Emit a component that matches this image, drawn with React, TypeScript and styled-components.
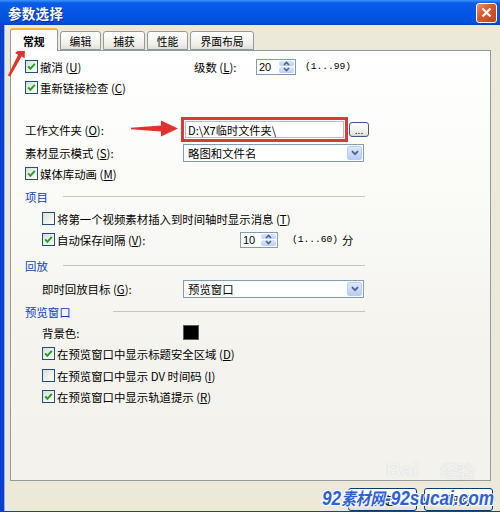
import React from 'react';
import styled, { createGlobalStyle } from 'styled-components';

const GlobalStyle = createGlobalStyle`
  html, body {
    margin: 0;
    padding: 0;
    background: #fff;
  }
  body {
    font-family: "Noto Sans CJK SC", "Liberation Sans", sans-serif;
    font-size: 11.4px;
    color: #000;
  }
`;

const Window = styled.div`
  position: relative;
  width: 500px;
  height: 512px;
  display: flex;
  flex-direction: column;
  overflow: hidden;
`;

const TitleBar = styled.div`
  height: 25px;
  flex: none;
  display: flex;
  align-items: center;
  justify-content: space-between;
  padding: 0 3px 0 8px;
  background: linear-gradient(180deg, #3d95ff 0%, #0a5ce8 12%, #0356e6 50%, #0250de 85%, #0643c4 100%);
  color: #fff;
  font-weight: bold;
  font-size: 13.5px;
  letter-spacing: 0.3px;
  text-shadow: 1px 1px #0b2a8f;
`;

const CloseButton = styled.div`
  width: 19px;
  height: 18px;
  border: 1px solid #fff;
  border-radius: 3px;
  background: linear-gradient(135deg, #f0906a 0%, #dd5a30 40%, #c94119 100%);
  display: flex;
  align-items: center;
  justify-content: center;
`;

const Frame = styled.div`
  flex: 1;
  display: flex;
  flex-direction: column;
  background: #ece9d8;
  border-left: 4px solid #0b3fd0;
  border-bottom: 4px solid #0b3fd0;
  box-shadow: inset 1px 0 #8fb0f0;
  padding: 5px 9px 0 6px;
`;

const TabStrip = styled.div`
  height: 20px;
  display: flex;
  align-items: flex-end;
  gap: 2px;
`;

const Tab = styled.div<{ $active?: boolean }>`
  height: ${(p) => (p.$active ? 21 : 17)}px;
  margin-bottom: ${(p) => (p.$active ? -1 : 0)}px;
  padding: 0 ${(p) => (p.$active ? 12 : 9)}px;
  position: relative;
  z-index: ${(p) => (p.$active ? 2 : 0)};
  display: flex;
  align-items: center;
  justify-content: center;
  border: 1px solid #919b9c;
  border-bottom: ${(p) => (p.$active ? 'none' : '1px solid #919b9c')};
  border-top: ${(p) => (p.$active ? '2px solid #f4b43c' : '1px solid #919b9c')};
  border-radius: 3px 3px 0 0;
  background: ${(p) => (p.$active ? '#fcfcfe' : 'linear-gradient(#ffffff, #f0efea 70%, #e2e0d6)')};
  font-weight: ${(p) => (p.$active ? 'bold' : 'normal')};
  font-size: 10.8px;
`;

const Panel = styled.div`
  height: 424px;
  border: 1px solid #919b9c;
  background: linear-gradient(180deg, #ffffff 0%, #fbfbf8 30%, #f4f3ee 70%, #f3f2ec 100%);
  padding: 5px 0 0 14px;
  display: flex;
  flex-direction: column;
`;

const Row = styled.div<{ $h?: number; $mt?: number; $indent?: boolean }>`
  height: ${(p) => p.$h ?? 21}px;
  margin-top: ${(p) => p.$mt ?? 0}px;
  padding-left: ${(p) => (p.$indent ? 17 : 0)}px;
  display: flex;
  align-items: center;
  white-space: nowrap;
`;

const Label = styled.div<{ $w?: number }>`
  width: ${(p) => (p.$w ? `${p.$w}px` : 'auto')};
  flex: none;
  display: flex;
  align-items: center;
`;

const Mono = styled.span<{ $ml: number }>`
  margin-left: ${(p) => p.$ml}px;
  font-family: "Liberation Mono", monospace;
  font-size: 9.6px;
`;

const Box = styled.span`
  width: 11px;
  height: 11px;
  flex: none;
  margin-right: 2px;
  border: 1px solid #1c5180;
  background: linear-gradient(135deg, #dcdcd7 0%, #f2f2ee 60%, #ffffff 100%);
  display: flex;
  align-items: center;
  justify-content: center;
`;

const SpinBox = styled.div<{ $w: number }>`
  width: ${(p) => p.$w}px;
  height: 16px;
  flex: none;
  border: 1px solid #7f9db9;
  background: #fff;
  display: flex;
  box-sizing: border-box;
`;

const SpinValue = styled.div`
  flex: 1;
  padding-left: 2px;
  display: flex;
  align-items: center;
  font-family: "Liberation Sans", sans-serif;
  font-size: 11px;
`;

const SpinButtons = styled.div`
  width: 15px;
  display: flex;
  flex-direction: column;
  gap: 1px;
  padding: 1px 1px 1px 0;
`;

const SpinHalf = styled.div`
  flex: 1;
  border-radius: 2px;
  background: linear-gradient(#dbe6fd, #bcd0f7);
  display: flex;
  align-items: center;
  justify-content: center;
`;

const Select = styled.div<{ $w: number }>`
  width: ${(p) => p.$w}px;
  height: 18px;
  flex: none;
  box-sizing: border-box;
  border: 1px solid #7f9db9;
  background: #fff;
  display: flex;
  align-items: center;
  padding: 1px;
`;

const SelectText = styled.div`
  flex: 1;
  padding-left: 3px;
`;

const DropButton = styled.div`
  width: 15px;
  height: 14px;
  border-radius: 2px;
  background: linear-gradient(#dde8fe, #b9cdf6);
  border: 1px solid #bccbeb;
  box-sizing: border-box;
  display: flex;
  align-items: center;
  justify-content: center;
`;

const RedBox = styled.div`
  width: 167px;
  height: 25px;
  flex: none;
  box-sizing: border-box;
  border: 3px solid #d83a34;
  padding: 1px;
  display: flex;
`;

const TextInput = styled.div`
  flex: 1;
  border: 1px solid #a9bde0;
  background: #fff;
  display: flex;
  align-items: center;
  padding-left: 2px;
  font-size: 11.2px;
`;

const SmallButton = styled.div`
  width: 20px;
  height: 15px;
  margin-left: 1px;
  box-sizing: border-box;
  border: 1px solid #3c5a84;
  border-radius: 3px;
  background: linear-gradient(#ffffff, #ecebe6 80%, #d8d3c6);
  display: flex;
  align-items: flex-end;
  justify-content: center;
  font-family: "Liberation Sans", sans-serif;
  font-size: 10px;
  line-height: 11px;
`;

const Header = styled.div<{ $gap: number }>`
  width: 340px;
  display: flex;
  align-items: center;
  color: #0b3fbf;

  &::after {
    content: '';
    flex: 1;
    height: 1px;
    margin-left: ${(p) => p.$gap}px;
    background: #c9c6b8;
  }
`;

const Swatch = styled.div`
  width: 14px;
  height: 13px;
  background: #000;
  border: 1px solid #5a5a5a;
`;

const ButtonRow = styled.div`
  display: flex;
  justify-content: flex-end;
  gap: 7px;
  padding-top: 7px;
  margin-right: -2px;
`;

const DialogButton = styled.div`
  width: 69px;
  height: 23px;
  box-sizing: border-box;
  border: 1px solid #003c74;
  border-radius: 3px;
  background: linear-gradient(#ffffff, #f3f2ee 60%, #e3e0d5);
  display: flex;
  align-items: center;
  justify-content: center;
`;

const Overlay = styled.svg`
  position: absolute;
  left: 0;
  top: 0;
  pointer-events: none;
`;

const BaiduMark = styled.div`
  position: absolute;
  left: 386px;
  top: 458px;
  font-family: "Liberation Sans", sans-serif;
  font-weight: bold;
  font-size: 21px;
  color: rgba(255, 255, 255, 0.75);
  text-shadow: 0 0 1px rgba(120, 120, 120, 0.35);
  pointer-events: none;

  span {
    margin-left: 22px;
    font-size: 17px;
  }
`;

const SiteMark = styled.div`
  position: absolute;
  left: 322px;
  top: 485px;
  font-family: "Liberation Sans", "Noto Sans CJK SC", sans-serif;
  font-weight: bold;
  font-style: italic;
  font-size: 20px;
  line-height: 25px;
  color: #2c5fd8;
  transform-origin: left center;
  transform: scaleX(0.86);
  text-shadow: 1px 0 #fff, -1px 0 #fff, 0 1px #fff, 0 -1px #fff, 1px 1px #fff, -1px -1px #fff;
  white-space: nowrap;
  pointer-events: none;

  span {
    font-family: "Noto Sans CJK SC", sans-serif;
    font-size: 17px;
  }
`;

const Check = () => (
  <svg width="9" height="9" viewBox="0 0 9 9">
    <path d="M1.2 4.3 L3.4 6.8 L7.8 1.8" fill="none" stroke="#21a121" strokeWidth="2" />
  </svg>
);

const CheckItem = ({ checked, children }: { checked?: boolean; children: React.ReactNode }) => (
  <Label>
    <Box>{checked && <Check />}</Box>
    <span>{children}</span>
  </Label>
);

const Chevron = ({ up }: { up?: boolean }) => (
  <svg width="7" height="5" viewBox="0 0 7 5">
    <path d={up ? 'M1 4 L3.5 1.5 L6 4' : 'M1 1 L3.5 3.5 L6 1'} fill="none" stroke="#4d6185" strokeWidth="1.6" />
  </svg>
);

const Spinner = ({ value, w }: { value: string; w: number }) => (
  <SpinBox $w={w}>
    <SpinValue>{value}</SpinValue>
    <SpinButtons>
      <SpinHalf><Chevron up /></SpinHalf>
      <SpinHalf><Chevron /></SpinHalf>
    </SpinButtons>
  </SpinBox>
);

const Dropdown = ({ text, w }: { text: string; w: number }) => (
  <Select $w={w}>
    <SelectText>{text}</SelectText>
    <DropButton>
      <svg width="8" height="6" viewBox="0 0 8 6">
        <path d="M1 1.2 L4 4.2 L7 1.2" fill="none" stroke="#4d6185" strokeWidth="1.8" />
      </svg>
    </DropButton>
  </Select>
);

// arrow polygon from tail to tip
function arrow(tx: number, ty: number, hx: number, hy: number, tailW: number, shaftW: number, headLen: number, headW: number) {
  const dx = hx - tx;
  const dy = hy - ty;
  const len = Math.hypot(dx, dy);
  const ux = dx / len;
  const uy = dy / len;
  const nx = -uy;
  const ny = ux;
  const bx = hx - ux * headLen;
  const by = hy - uy * headLen;
  const pts = [
    [tx + nx * tailW, ty + ny * tailW],
    [bx + nx * shaftW, by + ny * shaftW],
    [bx + nx * headW, by + ny * headW],
    [hx, hy],
    [bx - nx * headW, by - ny * headW],
    [bx - nx * shaftW, by - ny * shaftW],
    [tx - nx * tailW, ty - ny * tailW],
  ];
  return pts.map((p) => `${p[0].toFixed(1)},${p[1].toFixed(1)}`).join(' ');
}

const U = ({ k }: { k: string }) => (
  <> (<u>{k}</u>)</>
);

export default function App() {
  return (
    <>
      <GlobalStyle />
      <Window>
        <TitleBar>
          <span>参数选择</span>
          <CloseButton>
            <svg width="11" height="11" viewBox="0 0 11 11">
              <path d="M1.5 1.5 L9.5 9.5 M9.5 1.5 L1.5 9.5" stroke="#fff" strokeWidth="2.2" />
            </svg>
          </CloseButton>
        </TitleBar>
        <Frame>
          <TabStrip>
            <Tab $active>常规</Tab>
            <Tab>编辑</Tab>
            <Tab>捕获</Tab>
            <Tab>性能</Tab>
            <Tab>界面布局</Tab>
          </TabStrip>
          <Panel>
            <Row>
              <Label $w={169}>
                <CheckItem checked>撤消<U k="U" /></CheckItem>
              </Label>
              <Label $w={62}>级数<U k="L" />:</Label>
              <Spinner value="20" w={40} />
              <Mono $ml={9}>(1...99)</Mono>
            </Row>
            <Row>
              <CheckItem checked>重新链接检查<U k="C" /></CheckItem>
            </Row>
            <Row $h={25} $mt={19}>
              <Label $w={156}>工作文件夹<U k="O" />:</Label>
              <RedBox>
                <TextInput>D:\X7临时文件夹\</TextInput>
              </RedBox>
              <SmallButton>...</SmallButton>
            </Row>
            <Row>
              <Label $w={158}>素材显示模式<U k="S" />:</Label>
              <Dropdown text="略图和文件名" w={181} />
            </Row>
            <Row>
              <CheckItem checked>媒体库动画<U k="M" /></CheckItem>
            </Row>
            <Row $mt={2}>
              <Header $gap={15}>项目</Header>
            </Row>
            <Row $mt={1} $indent>
              <CheckItem>将第一个视频素材插入到时间轴时显示消息<U k="T" /></CheckItem>
            </Row>
            <Row $indent>
              <Label $w={198}>
                <CheckItem checked>自动保存间隔<U k="V" />:</CheckItem>
              </Label>
              <Spinner value="10" w={38} />
              <Mono $ml={14}>(1...60)</Mono>
              <Label style={{ marginLeft: 4 }}>分</Label>
            </Row>
            <Row $mt={5}>
              <Header $gap={15}>回放</Header>
            </Row>
            <Row $mt={2} $indent>
              <Label $w={141}>即时回放目标<U k="G" />:</Label>
              <Dropdown text="预览窗口" w={181} />
            </Row>
            <Row $mt={2}>
              <Header $gap={42}>预览窗口</Header>
            </Row>
            <Row $indent>
              <Label $w={141}>背景色:</Label>
              <Swatch />
            </Row>
            <Row $indent>
              <CheckItem checked>在预览窗口中显示标题安全区域<U k="D" /></CheckItem>
            </Row>
            <Row $mt={1} $indent>
              <CheckItem>在预览窗口中显示 DV 时间码<U k="I" /></CheckItem>
            </Row>
            <Row $indent>
              <CheckItem checked>在预览窗口中显示轨道提示<U k="R" /></CheckItem>
            </Row>
          </Panel>
          <ButtonRow>
            <DialogButton>确定</DialogButton>
            <DialogButton>取消</DialogButton>
          </ButtonRow>
        </Frame>
        <Overlay width="500" height="512" viewBox="0 0 500 512">
          <polygon points={arrow(9, 76, 25, 46, 1.2, 2, 11, 5.5)} fill="#e0322e" />
          <polygon points={arrow(131, 128.5, 178, 128.5, 0.8, 3, 17, 8)} fill="#e0322e" />
        </Overlay>
        <BaiduMark>Bai<span>经验</span></BaiduMark>
        <SiteMark>92<span>素材网</span>-92sucai.com</SiteMark>
      </Window>
    </>
  );
}
